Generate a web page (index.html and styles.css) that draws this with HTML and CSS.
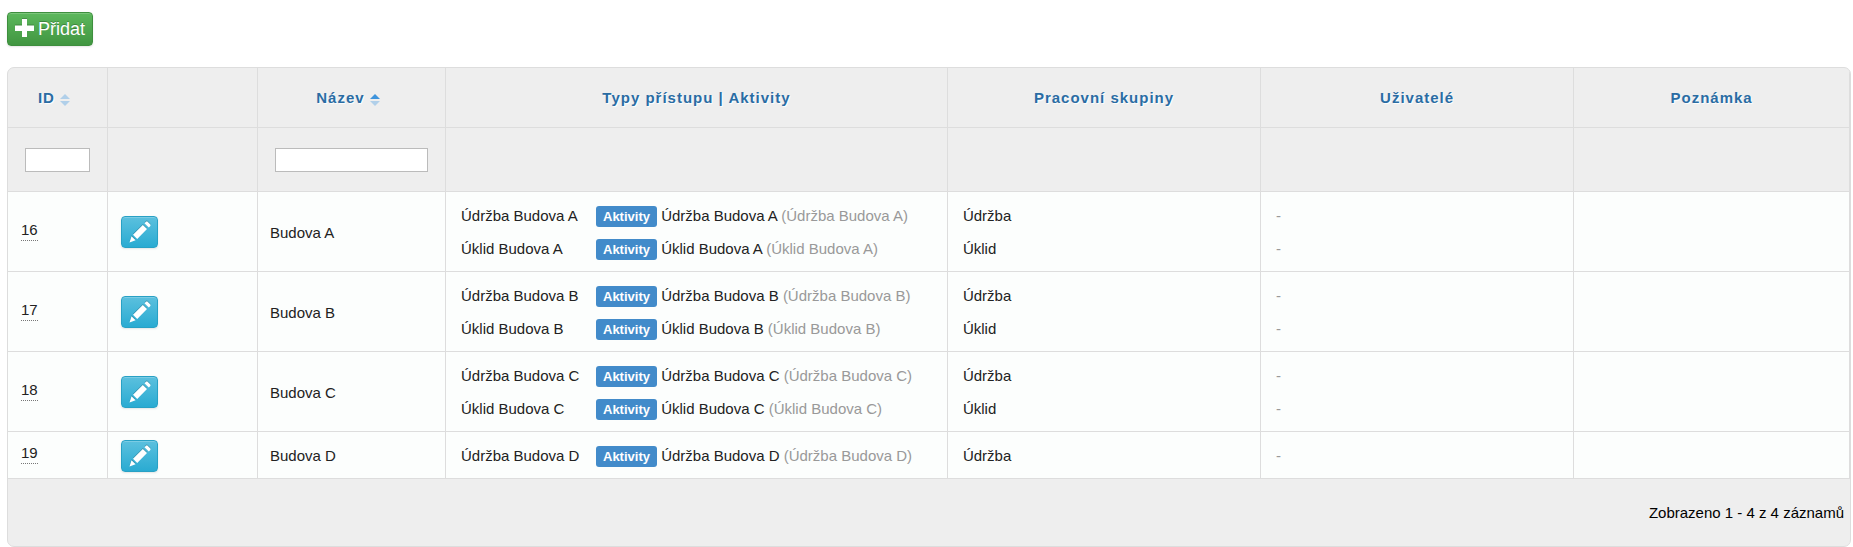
FILE: index.html
```html
<!DOCTYPE html>
<html lang="cs">
<head>
    <meta charset="UTF-8">
    <meta name="viewport" content="width=device-width, initial-scale=1.0">
    <title>Budovy</title>
    <link rel="stylesheet" href="styles.css">
</head>
<body>

    <!-- Shared icons -->
    <svg class="sprite" aria-hidden="true">
        <symbol id="icon-plus" viewBox="0 0 19 20">
            <path d="M7 0h5v6.500h7v5.500h-7v6H7v-6H0V6.500h7z"/>
        </symbol>
        <symbol id="icon-pencil" viewBox="0 0 22 22">
            <path d="M16.800.9c.6-.6 1.400-.6 2 0l2.300 2.300c.6.600.6 1.400 0 2l-1.300 1.300-4.300-4.300zM13.800 3.900l4.200 4.200L8.200 17.900 4 13.700zM2.500 15.200l4.100 4.100L.5 21.400z"/>
        </symbol>
        <symbol id="icon-sort" viewBox="0 0 10 13">
            <path class="sort-up" d="M5 0l5 5H0z"/>
            <path class="sort-down" d="M0 7h10l-5 5z"/>
        </symbol>
    </svg>

    <button type="button" class="btn btn-add"><svg width="19" height="20"><use href="#icon-plus"/></svg>Přidat</button>

    <div class="grid-box">
        <table class="grid">
            <colgroup>
                <col class="col-id">
                <col class="col-actions">
                <col class="col-name">
                <col class="col-types">
                <col class="col-groups">
                <col class="col-users">
                <col>
            </colgroup>
            <thead>
                <tr class="head-row">
                    <th><a href="#">ID <svg class="sort" width="10" height="13"><use href="#icon-sort"/></svg></a></th>
                    <th></th>
                    <th><a href="#">Název <svg class="sort asc" width="10" height="13"><use href="#icon-sort"/></svg></a></th>
                    <th>Typy přístupu | Aktivity</th>
                    <th>Pracovní skupiny</th>
                    <th>Uživatelé</th>
                    <th>Poznámka</th>
                </tr>
                <tr class="filter-row">
                    <td><input type="text" aria-label="ID"></td>
                    <td></td>
                    <td><input type="text" aria-label="Název"></td>
                    <td></td>
                    <td></td>
                    <td></td>
                    <td></td>
                </tr>
            </thead>
            <tbody>
                <tr>
                    <td><abbr>16</abbr></td>
                    <td><button type="button" class="btn btn-edit" aria-label="Upravit"><svg width="22" height="22"><use href="#icon-pencil"/></svg></button></td>
                    <td>Budova A</td>
                    <td>
                        <div class="line access"><span>Údržba Budova A</span><span><span class="label">Aktivity</span> Údržba Budova A <span class="muted">(Údržba Budova A)</span></span></div>
                        <div class="line access"><span>Úklid Budova A</span><span><span class="label">Aktivity</span> Úklid Budova A <span class="muted">(Úklid Budova A)</span></span></div>
                    </td>
                    <td><div class="line">Údržba</div><div class="line">Úklid</div></td>
                    <td><div class="line muted">-</div><div class="line muted">-</div></td>
                    <td></td>
                </tr>
                <tr>
                    <td><abbr>17</abbr></td>
                    <td><button type="button" class="btn btn-edit" aria-label="Upravit"><svg width="22" height="22"><use href="#icon-pencil"/></svg></button></td>
                    <td>Budova B</td>
                    <td>
                        <div class="line access"><span>Údržba Budova B</span><span><span class="label">Aktivity</span> Údržba Budova B <span class="muted">(Údržba Budova B)</span></span></div>
                        <div class="line access"><span>Úklid Budova B</span><span><span class="label">Aktivity</span> Úklid Budova B <span class="muted">(Úklid Budova B)</span></span></div>
                    </td>
                    <td><div class="line">Údržba</div><div class="line">Úklid</div></td>
                    <td><div class="line muted">-</div><div class="line muted">-</div></td>
                    <td></td>
                </tr>
                <tr>
                    <td><abbr>18</abbr></td>
                    <td><button type="button" class="btn btn-edit" aria-label="Upravit"><svg width="22" height="22"><use href="#icon-pencil"/></svg></button></td>
                    <td>Budova C</td>
                    <td>
                        <div class="line access"><span>Údržba Budova C</span><span><span class="label">Aktivity</span> Údržba Budova C <span class="muted">(Údržba Budova C)</span></span></div>
                        <div class="line access"><span>Úklid Budova C</span><span><span class="label">Aktivity</span> Úklid Budova C <span class="muted">(Úklid Budova C)</span></span></div>
                    </td>
                    <td><div class="line">Údržba</div><div class="line">Úklid</div></td>
                    <td><div class="line muted">-</div><div class="line muted">-</div></td>
                    <td></td>
                </tr>
                <tr>
                    <td><abbr>19</abbr></td>
                    <td><button type="button" class="btn btn-edit" aria-label="Upravit"><svg width="22" height="22"><use href="#icon-pencil"/></svg></button></td>
                    <td>Budova D</td>
                    <td>
                        <div class="line access"><span>Údržba Budova D</span><span><span class="label">Aktivity</span> Údržba Budova D <span class="muted">(Údržba Budova D)</span></span></div>
                    </td>
                    <td><div class="line">Údržba</div></td>
                    <td><div class="line muted">-</div></td>
                    <td></td>
                </tr>
            </tbody>
            <tfoot>
                <tr>
                    <td colspan="7">Zobrazeno 1 - 4 z 4 záznamů</td>
                </tr>
            </tfoot>
        </table>
    </div>

</body>
</html>
```

FILE: styles.css
```css
/* General Layout Styles */
* {
    box-sizing: border-box;
}

body {
    font-family: "Liberation Sans", Arial, sans-serif;
    font-size: 15px;
    line-height: 21px;
    color: #222;
    background-color: #fff;
    margin: 0;
    padding: 12px 2px 0 7px;
}

.sprite {
    display: none;
}

/* Buttons */
.btn {
    display: flex;
    align-items: center;
    justify-content: center;
    font-family: inherit;
    color: #fff;
    border-radius: 4px;
    cursor: pointer;
    box-shadow: inset 0 1px 0 rgba(255, 255, 255, 0.2), 0 1px 2px rgba(0, 0, 0, 0.1);
}

.btn svg {
    fill: #fff;
    filter: drop-shadow(0 -1px 0 rgba(0, 0, 0, 0.2));
}

.btn-add {
    gap: 4px;
    height: 34px;
    padding: 0 7px;
    font-size: 18px;
    text-shadow: 0 -1px 0 rgba(0, 0, 0, 0.25);
    border: 1px solid #3e8f3e;
    background: linear-gradient(#5cb85c, #419641);
}

.btn-edit {
    width: 37px;
    height: 32px;
    padding: 0;
    border: 1px solid #28a1c5;
    background: linear-gradient(#5bc0de, #2aabd2);
}

/* Table */
.grid-box {
    margin-top: 21px;
    border: 1px solid #ddd;
    border-radius: 7px;
    overflow: hidden;
    background-color: #eee;
}

.grid {
    width: 100%;
    table-layout: fixed;
    border-collapse: separate;
    border-spacing: 0;
}

.grid td,
.grid th {
    padding: 0 13px;
    border-right: 1px solid #ddd;
    border-bottom: 1px solid #ddd;
    text-align: left;
    vertical-align: middle;
}

.col-id {
    width: 100px;
}

.col-actions {
    width: 150px;
}

.col-name {
    width: 188px;
}

.col-types {
    width: 27.25%;
}

.col-groups,
.col-users {
    width: 17%;
}

.grid .head-row th {
    height: 60px;
    font-size: 15px;
    letter-spacing: 1px;
    text-align: center;
    color: #2a6ca3;
    text-shadow: 1px 1px 1px #fff;
}

.head-row a {
    padding-right: 7px;
    color: inherit;
    text-decoration: none;
}

.sort {
    vertical-align: -4px;
    color: #b0cfe9;
    fill: #b0cfe9;
}

.sort.asc {
    color: #3f94dc;
}

.sort-up {
    fill: currentColor;
}

.grid .filter-row td {
    height: 64px;
    padding: 0 17px;
}

.filter-row input {
    display: block;
    width: 100%;
    height: 24px;
    padding: 0 4px;
    font: inherit;
    border: 1px solid #bbb;
    background-color: #fff;
}

.grid tbody td {
    padding: 7px 13px 6px;
    background-color: #fcfefd;
}

.grid tbody td:nth-child(3) {
    padding-left: 12px;
}

.grid tbody td:nth-child(n+4) {
    padding-left: 15px;
}

abbr {
    display: inline-block;
    margin-bottom: 5px;
    border-bottom: 1px dotted #777;
}

.line {
    height: 33px;
    line-height: 33px;
    white-space: nowrap;
}

.access {
    display: grid;
    grid-template-columns: 135px 1fr;
}

.label {
    display: inline-block;
    padding: 0 7px;
    font-size: 13px;
    font-weight: bold;
    line-height: 21px;
    color: #fff;
    border-radius: 3px;
    background-color: #428bca;
}

.muted {
    color: #999;
}

.grid tfoot td {
    height: 67px;
    padding: 0 6px;
    border: 0;
    text-align: right;
    color: #000;
}
```
